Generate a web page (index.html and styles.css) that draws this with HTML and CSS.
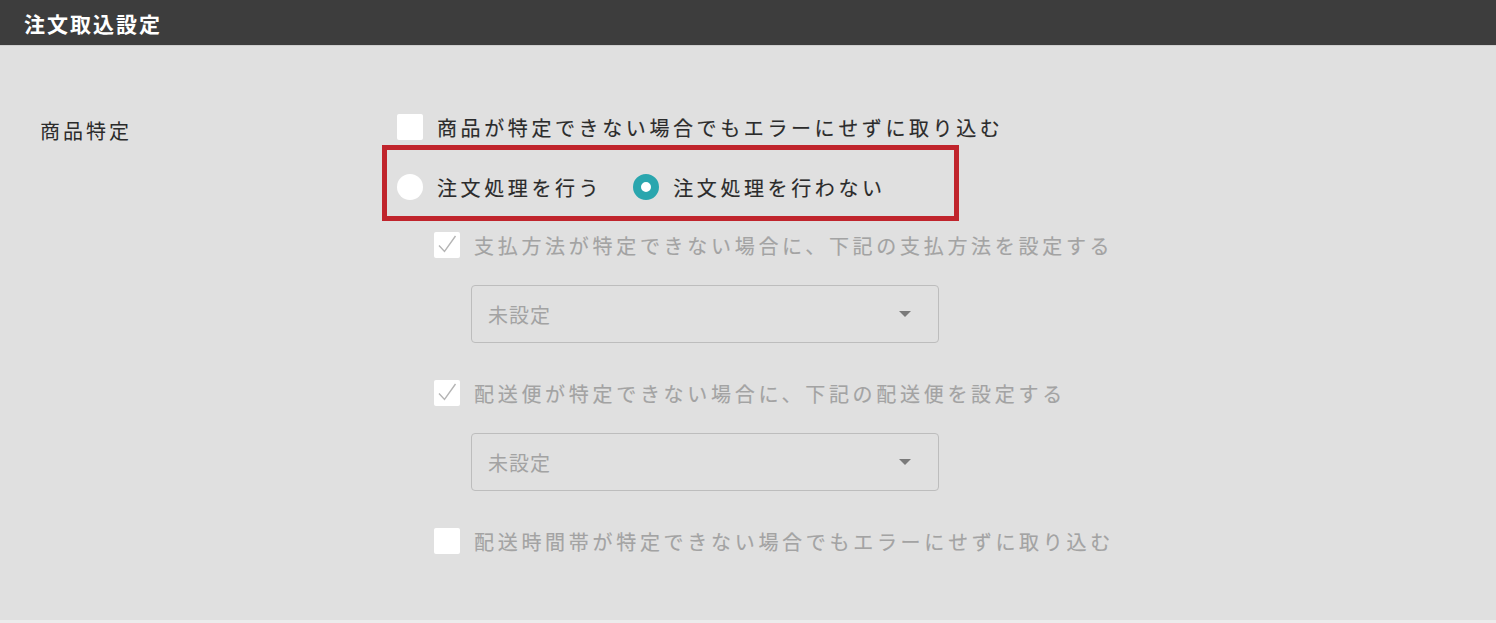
FILE: index.html
```html
<!DOCTYPE html>
<html lang="ja">

<head>
    <meta charset="UTF-8">
    <meta name="viewport" content="width=device-width, initial-scale=1.0">
    <title>注文取込設定</title>
    <link rel="stylesheet" href="styles.css">
</head>

<body>
    <div class="panel-header">注文取込設定</div>

    <div class="panel-body">
        <div class="setting-row">
            <div class="setting-label">商品特定</div>

            <div class="setting-options">
                <label class="option">
                    <span class="check"></span>
                    <span class="option-text">商品が特定できない場合でもエラーにせずに取り込む</span>
                </label>

                <div class="radio-group">
                    <label class="option">
                        <span class="radio"></span>
                        <span class="option-text">注文処理を行う</span>
                    </label>
                    <label class="option">
                        <span class="radio selected"></span>
                        <span class="option-text">注文処理を行わない</span>
                    </label>
                </div>

                <div class="sub-options">
                    <label class="option disabled">
                        <span class="check">
                            <svg viewBox="0 0 26 26" width="26" height="26"><path d="M5 13.5 L10.5 19.5 L21.5 4" fill="none" stroke="#b5b5b5" stroke-width="1.4"/></svg>
                        </span>
                        <span class="option-text">支払方法が特定できない場合に、下記の支払方法を設定する</span>
                    </label>
                    <div class="select disabled">
                        <span>未設定</span>
                        <span class="caret"></span>
                    </div>

                    <label class="option disabled">
                        <span class="check">
                            <svg viewBox="0 0 26 26" width="26" height="26"><path d="M5 13.5 L10.5 19.5 L21.5 4" fill="none" stroke="#b5b5b5" stroke-width="1.4"/></svg>
                        </span>
                        <span class="option-text">配送便が特定できない場合に、下記の配送便を設定する</span>
                    </label>
                    <div class="select disabled">
                        <span>未設定</span>
                        <span class="caret"></span>
                    </div>

                    <label class="option disabled">
                        <span class="check"></span>
                        <span class="option-text">配送時間帯が特定できない場合でもエラーにせずに取り込む</span>
                    </label>
                </div>
            </div>
        </div>
    </div>
</body>

</html>
```

FILE: styles.css
```css
body, html {
    margin: 0;
    padding: 0;
    height: 100%;
    background-color: #e0e0e0;
    font-family: "Noto Sans CJK JP", "Noto Sans", sans-serif;
    color: #2b2b2b;
}

.panel-header {
    height: 45px;
    background-color: #3d3d3d;
    color: #fff;
    font-size: 21px;
    font-weight: bold;
    letter-spacing: 2px;
    padding-left: 24px;
    display: flex;
    align-items: center;
    border-bottom: 1px solid #cfcfcf;
}

.panel-body {
    padding: 68px 40px 66px 40px;
    border-bottom: 4px solid #ececec;
}

.setting-row {
    display: flex;
}

.setting-label {
    width: 357px;
    font-size: 20px;
    letter-spacing: 3px;
    line-height: 26px;
    padding-top: 4px;
}

.setting-options {
    display: flex;
    flex-direction: column;
}

.option {
    display: flex;
    align-items: center;
    height: 26px;
    cursor: pointer;
}

.option-text {
    font-size: 20px;
    letter-spacing: 3.6px;
    margin-left: 14px;
    white-space: nowrap;
    -webkit-text-stroke: 0.15px currentColor;
}

.check {
    width: 26px;
    height: 26px;
    background-color: #fff;
    border-radius: 2px;
    flex-shrink: 0;
}

.check svg {
    display: block;
}

.radio {
    width: 26px;
    height: 26px;
    border-radius: 50%;
    background-color: #fff;
    box-sizing: border-box;
    flex-shrink: 0;
}

.radio.selected {
    border: 8px solid #2aa6ae;
}

/* highlighted pair of radios */
.radio-group {
    display: flex;
    gap: 31px;
    margin: 5px 0 0 -15px;
    width: 577px;
    box-sizing: border-box;
    border: 5px solid #c0242c;
    padding: 24px 10px 16px 10px;
}

.sub-options {
    display: flex;
    flex-direction: column;
    margin: 11px 0 0 37px;
}

.option.disabled {
    cursor: default;
}

.option.disabled .option-text {
    color: #a3a3a3;
    letter-spacing: 3.7px;
}

.select {
    width: 468px;
    height: 58px;
    margin: 27px 0 37px 37px;
    box-sizing: border-box;
    border: 1px solid #bdbdbd;
    border-radius: 4px;
    display: flex;
    align-items: center;
    justify-content: space-between;
    padding: 0 27px 0 16px;
    font-size: 20px;
    letter-spacing: 1px;
}

.select.disabled {
    color: #a3a3a3;
}

.caret {
    width: 0;
    height: 0;
    border-left: 6px solid transparent;
    border-right: 6px solid transparent;
    border-top: 6px solid #7a7a7a;
}
```
